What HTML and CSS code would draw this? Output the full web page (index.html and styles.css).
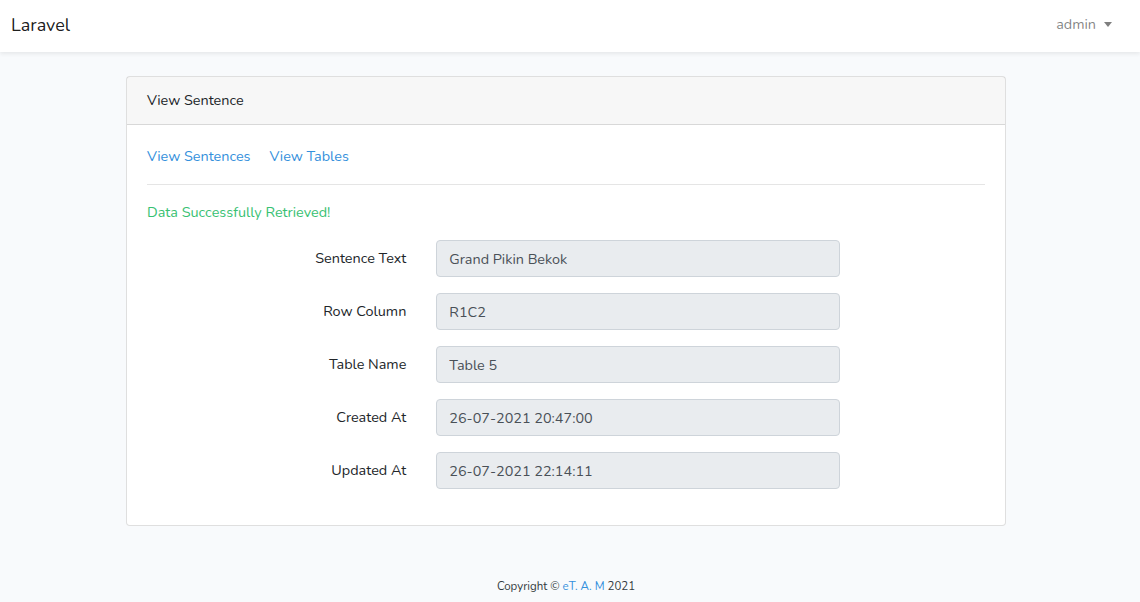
FILE: index.html
```html
<!DOCTYPE html>
<html lang="en">
<head>
<meta charset="utf-8">
<title>Laravel</title>
<link rel="stylesheet" href="styles.css">
</head>
<body>
<nav class="navbar">
  <a class="brand" href="#">Laravel</a>
  <a class="user-toggle" href="#">admin<span class="caret"></span></a>
</nav>
<main class="main">
  <div class="card">
    <div class="card-header">View Sentence</div>
    <div class="card-body">
      <div class="links">
        <a href="#">View Sentences</a>
        <a href="#">View Tables</a>
      </div>
      <hr class="divider">
      <p class="success">Data Successfully Retrieved!</p>
      <div class="form-row">
        <label class="label">Sentence Text</label>
        <div class="field"><input class="input" type="text" value="Grand Pikin Bekok" readonly></div>
      </div>
      <div class="form-row">
        <label class="label">Row Column</label>
        <div class="field"><input class="input" type="text" value="R1C2" readonly></div>
      </div>
      <div class="form-row">
        <label class="label">Table Name</label>
        <div class="field"><input class="input" type="text" value="Table 5" readonly></div>
      </div>
      <div class="form-row">
        <label class="label">Created At</label>
        <div class="field"><input class="input" type="text" value="26-07-2021 20:47:00" readonly></div>
      </div>
      <div class="form-row">
        <label class="label">Updated At</label>
        <div class="field"><input class="input" type="text" value="26-07-2021 22:14:11" readonly></div>
      </div>
    </div>
  </div>
</main>
<footer class="footer">Copyright © <a href="#">eT. A. M</a> 2021</footer>
</body>
</html>
```
FILE: styles.css
```css
* { box-sizing: border-box; }
html, body { margin: 0; padding: 0; }
body {
  background: #f8fafc;
  font-family: "Nunito", "Lato", "Open Sans", sans-serif;
  font-size: 14.4px;
  line-height: 1.6;
  color: #212529;
  width: 1140px;
  height: 602px;
  overflow: hidden;
}
a { color: #3490dc; text-decoration: none; }

.navbar {
  height: 52px;
  background: #fff;
  box-shadow: 0 2px 4px rgba(0,0,0,0.075);
  display: flex;
  align-items: center;
  justify-content: space-between;
  padding: 0 28px 0 11px;
  position: relative;
}
.brand {
  font-size: 18px;
  color: rgba(0,0,0,0.9);
  line-height: 1.6;
  margin-top: -2px;
}
.user-toggle {
  color: rgba(0,0,0,0.5);
  display: flex;
  align-items: center;
  margin-top: -3px;
}
.caret {
  display: inline-block;
  margin-left: 8px;
  width: 0; height: 0;
  border-top: 5px solid rgba(0,0,0,0.5);
  border-left: 4.5px solid transparent;
  border-right: 4.5px solid transparent;
  margin-top: 1px;
}

.main { padding: 24px 8px 24px 0; }
.card {
  width: 880px;
  margin: 0 auto;
  background: #fff;
  border: 1px solid rgba(0,0,0,0.125);
  border-radius: 4px;
}
.card-header {
  background: rgba(0,0,0,0.03);
  border-bottom: 1px solid rgba(0,0,0,0.125);
  padding: 12px 20px;
}
.card-body { padding: 20px; }
.links { display: flex; gap: 19px; }
.divider {
  margin: 16px 0;
  border: 0;
  border-top: 1px solid rgba(0,0,0,0.1);
  height: 0;
}
.success { color: #38c172; margin: 0 0 16px; }

.form-row {
  display: flex;
  margin: 0 -15px 16px;
}
.label {
  flex: 0 0 33.3333%;
  padding: 7px 15px;
  text-align: right;
  line-height: 1.6;
}
.field { flex: 0 0 50%; padding: 0 15px; }
.input {
  display: block;
  width: 100%;
  height: 37px;
  padding: 6px 12px;
  font: inherit;
  color: #495057;
  background: #e9ecef;
  border: 1px solid #ced4da;
  border-radius: 4px;
  outline: none;
}

.footer {
  text-align: center;
  font-size: 11.5px;
  line-height: 18px;
  padding: 27px 8px 0 0;
  color: #343a40;
}
```
